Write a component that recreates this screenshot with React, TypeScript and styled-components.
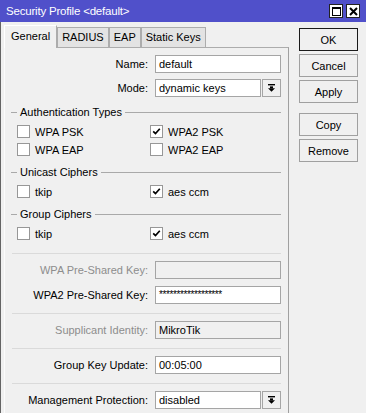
import React from "react";
import styled, { createGlobalStyle } from "styled-components";

const GlobalStyle = createGlobalStyle`
  html, body {
    margin: 0;
    padding: 0;
    background: #f0f0f0;
  }
  body {
    font-family: "Liberation Sans", Arial, sans-serif;
    font-size: 11px;
    color: #000;
  }
  * {
    box-sizing: border-box;
  }
`;

const AUTH_TYPES = [
  { name: "WPA PSK", checked: false },
  { name: "WPA2 PSK", checked: true },
  { name: "WPA EAP", checked: false },
  { name: "WPA2 EAP", checked: false },
];

const CIPHERS = [
  { name: "tkip", checked: false },
  { name: "aes ccm", checked: true },
];

const TABS = ["General", "RADIUS", "EAP", "Static Keys"];

const CheckMark = () => (
  <svg width="9" height="9" viewBox="0 0 9 9">
    <path d="M1.2 4.3 L3.5 6.6 L7.8 1.8" fill="none" stroke="#000" strokeWidth="1.7" />
  </svg>
);

const DropIcon = () => (
  <svg width="7" height="8" viewBox="0 0 7 8">
    <rect x="0" y="0" width="7" height="1.4" fill="#000" />
    <rect x="2" y="2.4" width="3" height="2" fill="#000" />
    <polygon points="0,4.3 7,4.3 3.5,7.8" fill="#000" />
  </svg>
);

const Check = ({ name, checked }: { name: string; checked: boolean }) => (
  <CheckItemStyled>
    <CheckBoxStyled>{checked && <CheckMark />}</CheckBoxStyled>
    {name}
  </CheckItemStyled>
);

const Field = ({
  label,
  value,
  disabled,
  select,
  password,
}: {
  label: string;
  value: string;
  disabled?: boolean;
  select?: boolean;
  password?: boolean;
}) => (
  <FieldRowStyled>
    <FieldLabelStyled $disabled={disabled}>{label}:</FieldLabelStyled>
    {select ? (
      <SelectWrapStyled>
        <FieldBoxStyled>{value}</FieldBoxStyled>
        <DropButtonStyled>
          <DropIcon />
        </DropButtonStyled>
      </SelectWrapStyled>
    ) : (
      <FieldBoxStyled $disabled={disabled} $password={password}>
        {value}
      </FieldBoxStyled>
    )}
  </FieldRowStyled>
);

const Group = ({
  title,
  items,
}: {
  title: string;
  items: { name: string; checked: boolean }[];
}) => (
  <div>
    <GroupHeadingStyled>{title}</GroupHeadingStyled>
    <CheckGridStyled>
      {items.map((item) => (
        <Check key={item.name} {...item} />
      ))}
    </CheckGridStyled>
  </div>
);

const App = () => {
  return (
    <WindowStyled>
      <GlobalStyle />
      <TitleBarStyled>
        <span>Security Profile &lt;default&gt;</span>
        <TitleButtonsStyled>
          <TitleButtonStyled>
            <svg width="9" height="9" viewBox="0 0 9 9">
              <rect x="0.5" y="0.5" width="8" height="8" fill="none" stroke="#000" />
              <rect x="0" y="0" width="9" height="2" fill="#000" />
            </svg>
          </TitleButtonStyled>
          <TitleButtonStyled>
            <svg width="9" height="9" viewBox="0 0 9 9">
              <path d="M1 1 L8 8 M8 1 L1 8" stroke="#000" strokeWidth="2" />
            </svg>
          </TitleButtonStyled>
        </TitleButtonsStyled>
      </TitleBarStyled>
      <BodyStyled>
        <MainStyled>
          <TabBarStyled>
            {TABS.map((tab, i) => (
              <TabStyled key={tab} $active={i === 0}>
                {tab}
              </TabStyled>
            ))}
          </TabBarStyled>
          <PanelStyled>
            <FormBlockStyled>
              <Field label="Name" value="default" />
              <Field label="Mode" value="dynamic keys" select />
            </FormBlockStyled>
            <GroupsStyled>
              <Group title="Authentication Types" items={AUTH_TYPES} />
              <Group title="Unicast Ciphers" items={CIPHERS} />
              <Group title="Group Ciphers" items={CIPHERS} />
            </GroupsStyled>
            <DividerStyled $first />
            <SectionStyled>
              <Field label="WPA Pre-Shared Key" value="" disabled />
              <Field label="WPA2 Pre-Shared Key" value="******************" password />
            </SectionStyled>
            <DividerStyled />
            <SectionStyled>
              <Field label="Supplicant Identity" value="MikroTik" disabled />
            </SectionStyled>
            <DividerStyled />
            <SectionStyled>
              <Field label="Group Key Update" value="00:05:00" />
            </SectionStyled>
            <DividerStyled />
            <SectionStyled>
              <Field label="Management Protection" value="disabled" select />
            </SectionStyled>
          </PanelStyled>
        </MainStyled>
        <SideStyled>
          <ButtonStyled $default>OK</ButtonStyled>
          <ButtonStyled>Cancel</ButtonStyled>
          <ButtonStyled>Apply</ButtonStyled>
          <ButtonStyled $spaced>Copy</ButtonStyled>
          <ButtonStyled>Remove</ButtonStyled>
        </SideStyled>
      </BodyStyled>
    </WindowStyled>
  );
};

const WindowStyled = styled.div`
  width: 366px;
  height: 413px;
  overflow: hidden;
  display: flex;
  flex-direction: column;
  background: #f0f0f0;
`;

const TitleBarStyled = styled.div`
  height: 22px;
  flex: none;
  display: flex;
  align-items: center;
  justify-content: space-between;
  padding: 0 6px 0 6px;
  background: #5050ca;
  color: #fff;
  font-size: 11.5px;
  letter-spacing: -0.2px;
`;

const TitleButtonsStyled = styled.div`
  display: flex;
  gap: 3px;
`;

const TitleButtonStyled = styled.div`
  width: 14px;
  height: 14px;
  display: flex;
  align-items: center;
  justify-content: center;
  background: #fff;
  border: 1px solid #222;
`;

const BodyStyled = styled.div`
  flex: 1;
  display: flex;
  padding: 3px 0 0 3px;
  border-left: 1px solid #646464;
`;

const MainStyled = styled.div`
  width: 285px;
  display: flex;
  flex-direction: column;
`;

const TabBarStyled = styled.div`
  height: 22px;
  display: flex;
  align-items: flex-end;
`;

const TabStyled = styled.div<{ $active?: boolean }>`
  position: relative;
  z-index: ${({ $active }) => ($active ? 2 : 1)};
  height: ${({ $active }) => ($active ? "23px" : "20px")};
  margin-bottom: ${({ $active }) => ($active ? "-1px" : "0")};
  padding: ${({ $active }) => ($active ? "0 6px 3px" : "0 4px 1px")};
  display: flex;
  align-items: center;
  background: ${({ $active }) => ($active ? "#f0f0f0" : "#e3e3e3")};
  border: 1px solid #acacac;
  border-bottom: none;
  border-left-color: ${({ $active }) => ($active ? "#fff" : "#acacac")};
  border-top-color: ${({ $active }) => ($active ? "#fff" : "#acacac")};
`;

const PanelStyled = styled.div`
  flex: 1;
  padding-top: 7px;
  border-top: 1px solid #acacac;
  border-right: 1px solid #a0a0a0;
  border-left: 1px solid #fbfbfb;
`;

const FormBlockStyled = styled.div`
  display: flex;
  flex-direction: column;
  gap: 6px;
`;

const FieldRowStyled = styled.div`
  display: grid;
  grid-template-columns: 143px 126px;
  column-gap: 7px;
  align-items: center;
  height: 18px;
`;

const FieldLabelStyled = styled.div<{ $disabled?: boolean }>`
  text-align: right;
  white-space: nowrap;
  color: ${({ $disabled }) => ($disabled ? "#8d8d8d" : "#000")};
`;

const FieldBoxStyled = styled.div<{ $disabled?: boolean; $password?: boolean }>`
  flex: 1;
  height: 18px;
  padding-left: 3px;
  line-height: 16px;
  white-space: nowrap;
  overflow: hidden;
  background: ${({ $disabled }) => ($disabled ? "#f0f0f0" : "#fff")};
  border: 1px solid #a5a5a5;
  font-size: ${({ $password }) => ($password ? "10px" : "11px")};
  letter-spacing: ${({ $password }) => ($password ? "-0.4px" : "normal")};
`;

const SelectWrapStyled = styled.div`
  display: flex;
  gap: 1px;
`;

const DropButtonStyled = styled.div`
  width: 19px;
  height: 18px;
  flex: none;
  display: flex;
  align-items: center;
  justify-content: center;
  background: #f0f0f0;
  border: 1px solid #a5a5a5;
`;

const GroupsStyled = styled.div`
  margin-top: 8px;
  display: flex;
  flex-direction: column;
  gap: 9px;
`;

const GroupHeadingStyled = styled.div`
  height: 14px;
  margin-bottom: 6px;
  padding: 0 7px 0 6px;
  display: flex;
  align-items: center;
  white-space: nowrap;
  &::before {
    content: "";
    width: 6px;
    height: 1px;
    margin-right: 3px;
    background: #a9a9a9;
  }
  &::after {
    content: "";
    flex: 1;
    height: 1px;
    margin-left: 3px;
    background: #a9a9a9;
  }
`;

const CheckGridStyled = styled.div`
  display: grid;
  grid-template-columns: 133px 1fr;
  row-gap: 5px;
  padding-left: 12px;
`;

const CheckItemStyled = styled.div`
  height: 13px;
  display: flex;
  align-items: center;
  gap: 5px;
`;

const CheckBoxStyled = styled.div`
  width: 13px;
  height: 13px;
  display: flex;
  align-items: center;
  justify-content: center;
  background: #fff;
  border: 1px solid #979797;
`;

const DividerStyled = styled.div<{ $first?: boolean }>`
  height: 1px;
  margin: ${({ $first }) => ($first ? "13px" : "0")} 7px 0 7px;
  background: #dadada;
`;

const SectionStyled = styled.div`
  display: flex;
  flex-direction: column;
  gap: 7px;
  padding: 7px 0 9px;
`;

const SideStyled = styled.div`
  width: 59px;
  margin-left: 10px;
  padding-top: 3px;
  display: flex;
  flex-direction: column;
  gap: 3px;
`;

const ButtonStyled = styled.div<{ $default?: boolean; $spaced?: boolean }>`
  height: 23px;
  margin-top: ${({ $spaced }) => ($spaced ? "7px" : "0")};
  display: flex;
  align-items: center;
  justify-content: center;
  background: #f0f0f0;
  border: 1px solid ${({ $default }) => ($default ? "#1a1a1a" : "#a0a0a0")};
`;

export default App;
